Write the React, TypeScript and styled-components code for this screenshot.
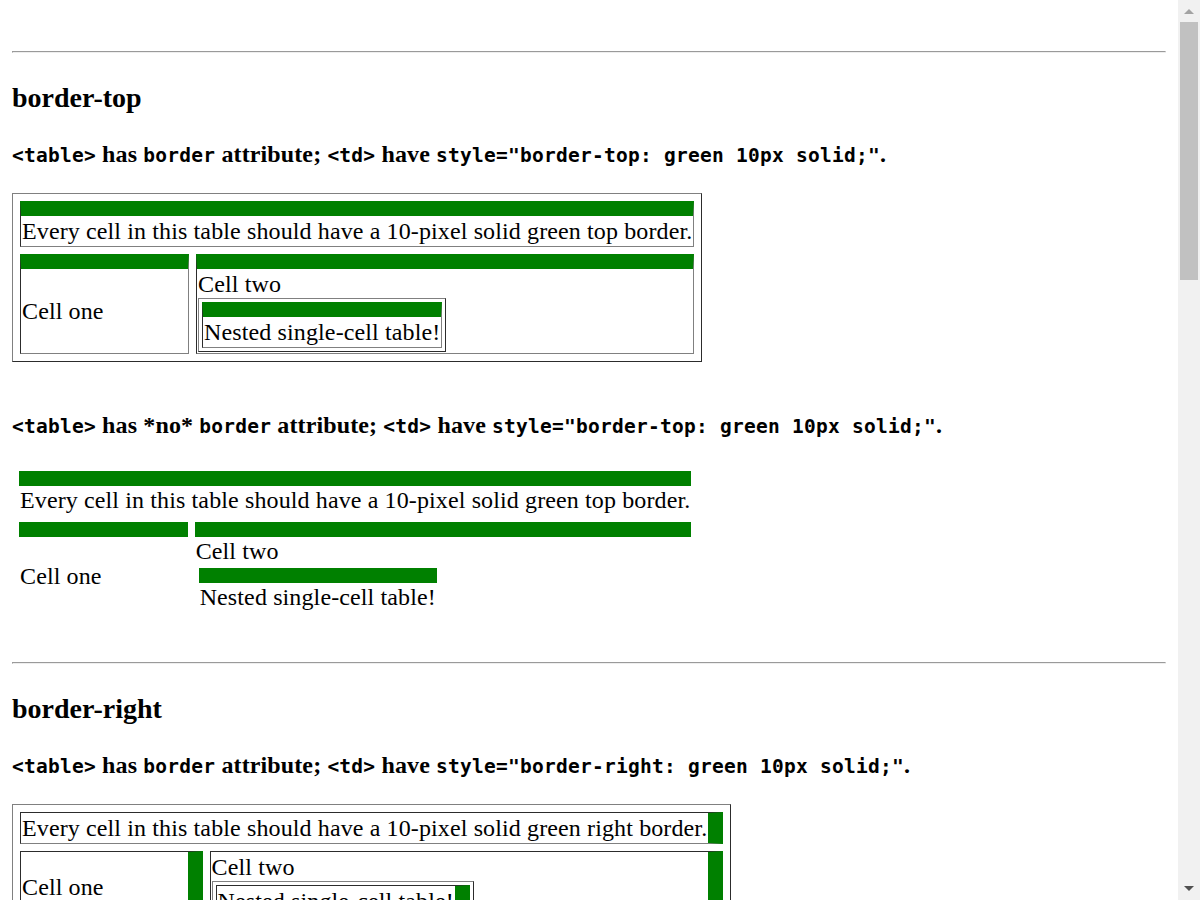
import React from 'react';
import styled, { createGlobalStyle, css } from 'styled-components';

type Side = 'top' | 'right' | 'bottom' | 'left' | 'all';

const Global = createGlobalStyle`
  html, body { margin: 0; padding: 0; background: #fff; }
  body {
    font-family: "Liberation Serif", "Times New Roman", serif;
    font-size: 24px;
    line-height: 28px;
    letter-spacing: 0.12px;
    color: #000;
  }
`;

const Page = styled.div`
  padding: 12px 34px 12px 12px;
`;

const Rule = styled.hr`
  margin: 39px 0 0;
`;

const Title = styled.h3`
  margin: 29px 0 0;
  font-size: 28px;
  line-height: 31px;
  letter-spacing: 0;
  font-weight: bold;
`;

const Test = styled.div`
  margin-top: 27px;
  & + & {
    margin-top: 49px;
  }
`;

const Caption = styled.h4`
  margin: 0 0 25px;
  font-size: 24px;
  line-height: 28px;
  font-weight: bold;
`;

const Code = styled.code`
  font-family: "DejaVu Sans Mono", monospace;
  font-size: 19.5px;
  line-height: 1;
  letter-spacing: 0.26px;
`;

const Grid = styled.table<{ $bordered: boolean; $nested?: boolean }>`
  font: inherit;
  letter-spacing: inherit;
  border-collapse: separate;
  border-spacing: ${(p) => (p.$nested ? 3 : 7)}px;
  ${(p) =>
    p.$bordered &&
    css`
      border: 1px outset gray;
    `}
`;

const sideCss = (side: Side) =>
  side === 'all'
    ? css`
        border: 15px solid green;
      `
    : css`
        border-${side}: 15px solid green;
      `;

const Cell = styled.td<{ $bordered: boolean; $side: Side }>`
  ${(p) =>
    p.$bordered
      ? css`
          padding: 1px;
          border: 1px inset gray;
        `
      : css`
          padding: 0 1px 1px;
        `}
  ${(p) => sideCss(p.$side)}
`;

const Scrollbar = styled.div`
  position: fixed;
  top: 0;
  right: 0;
  bottom: 0;
  width: 22px;
  background: #f1f1f1;
`;

const Thumb = styled.div`
  position: absolute;
  top: 22px;
  left: 2px;
  right: 2px;
  height: 258px;
  background: #c1c1c1;
`;

const Arrow = styled.svg<{ $down?: boolean }>`
  position: absolute;
  left: 6px;
  width: 10px;
  height: 5px;
  ${(p) => (p.$down ? 'bottom: 9px;' : 'top: 9px;')}
`;

const propName = (side: Side) => (side === 'all' ? 'border' : `border-${side}`);
const sideWord = (side: Side) => (side === 'all' ? '' : `${side} `);

function CellTable({ side, bordered }: { side: Side; bordered: boolean }) {
  return (
    <Grid $bordered={bordered}>
      <tbody>
        <tr>
          <Cell $bordered={bordered} $side={side} colSpan={2}>
            Every cell in this table should have a 10-pixel solid green {sideWord(side)}border.
          </Cell>
        </tr>
        <tr>
          <Cell $bordered={bordered} $side={side}>Cell one</Cell>
          <Cell $bordered={bordered} $side={side}>
            Cell two
            <Grid $bordered={bordered} $nested>
              <tbody>
                <tr>
                  <Cell $bordered={bordered} $side={side}>Nested single-cell table!</Cell>
                </tr>
              </tbody>
            </Grid>
          </Cell>
        </tr>
      </tbody>
    </Grid>
  );
}

function TestCase({ side, bordered }: { side: Side; bordered: boolean }) {
  return (
    <Test>
      <Caption>
        <Code>&lt;table&gt;</Code> has {bordered ? '' : '*no* '}
        <Code>border</Code> attribute; <Code>&lt;td&gt;</Code> have{' '}
        <Code>style="{propName(side)}: green 10px solid;"</Code>.
      </Caption>
      <CellTable side={side} bordered={bordered} />
    </Test>
  );
}

const sides: Side[] = ['top', 'right', 'bottom', 'left', 'all'];

export default function App() {
  return (
    <>
      <Global />
      <Page>
        {sides.map((side) => (
          <section key={side}>
            <Rule />
            <Title>{propName(side)}</Title>
            <TestCase side={side} bordered />
            <TestCase side={side} bordered={false} />
          </section>
        ))}
      </Page>
      <Scrollbar aria-hidden>
        <Arrow viewBox="0 0 10 5">
          <polygon points="0,5 10,5 5,0" fill="#a3a3a3" />
        </Arrow>
        <Thumb />
        <Arrow viewBox="0 0 10 5" $down>
          <polygon points="0,0 10,0 5,5" fill="#505050" />
        </Arrow>
      </Scrollbar>
    </>
  );
}
